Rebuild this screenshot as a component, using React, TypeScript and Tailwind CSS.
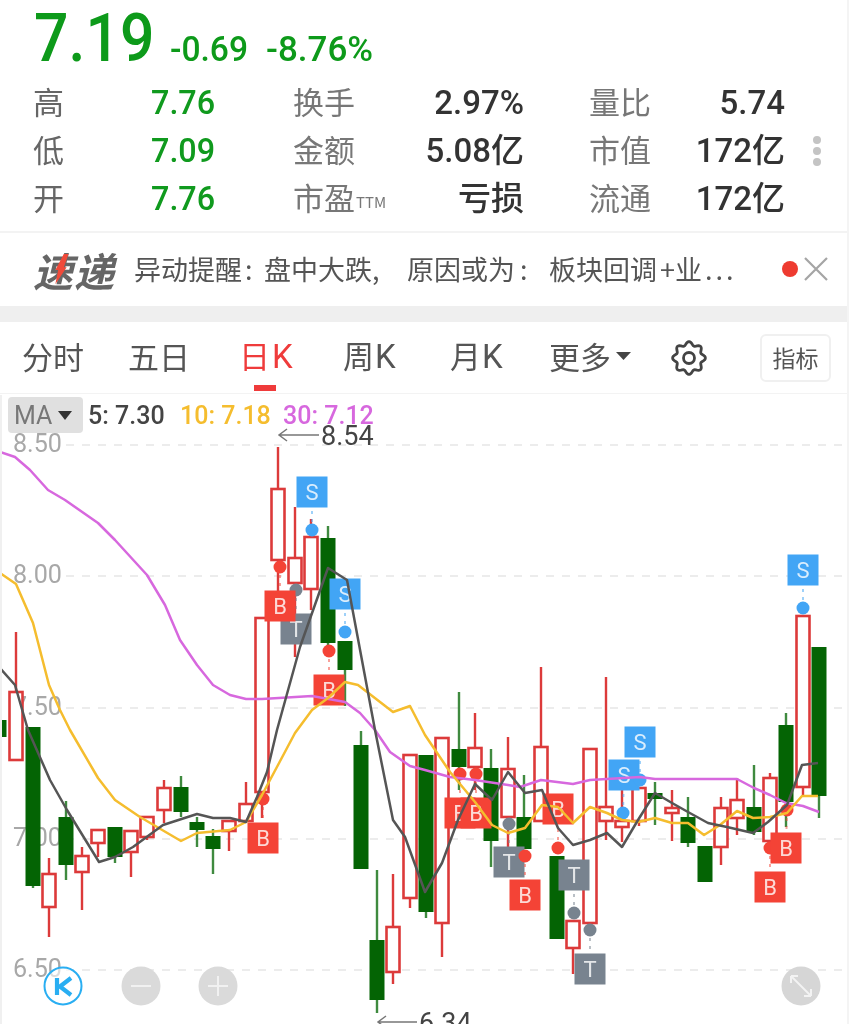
import React from "react";

const CJK = '"Noto Sans CJK SC", "Noto Sans", sans-serif';
const NUM = 'Roboto, "Noto Sans CJK SC", sans-serif';

type C = [number, number, number, number, number, "r" | "g"];
// x, wickTop, wickBottom, bodyTop, bodyBottom, type
const candles: C[] = [
  [-1, 682, 750, 720, 737, "g"],
  [16, 632, 760, 692, 760, "r"],
  [33, 727, 888, 727, 886, "g"],
  [49, 858, 937, 874, 907, "r"],
  [66, 801, 880, 817, 865, "g"],
  [82, 847, 910, 856, 872, "r"],
  [98, 829, 857, 830, 843, "r"],
  [115, 827, 863, 827, 857, "g"],
  [131, 831, 877, 831, 852, "r"],
  [147, 817, 840, 817, 837, "r"],
  [164, 780, 823, 788, 810, "r"],
  [181, 776, 817, 787, 812, "g"],
  [197, 817, 847, 822, 830, "g"],
  [213, 829, 874, 836, 849, "g"],
  [229, 820, 851, 821, 831, "r"],
  [246, 782, 822, 804, 821, "r"],
  [262, 618, 818, 618, 792, "r"],
  [278, 447, 600, 489, 560, "r"],
  [295, 507, 657, 558, 583, "r"],
  [311, 519, 610, 537, 589, "r"],
  [328, 526, 650, 538, 643, "g"],
  [345, 641, 706, 641, 670, "g"],
  [361, 731, 869, 745, 869, "g"],
  [377, 870, 1013, 940, 1000, "g"],
  [393, 874, 984, 927, 972, "r"],
  [410, 755, 908, 755, 898, "r"],
  [426, 755, 918, 755, 912, "g"],
  [442, 738, 957, 738, 923, "r"],
  [459, 692, 790, 749, 767, "g"],
  [475, 713, 790, 748, 767, "r"],
  [491, 749, 867, 768, 841, "g"],
  [508, 737, 850, 769, 817, "r"],
  [524, 775, 849, 817, 849, "g"],
  [541, 667, 821, 747, 821, "r"],
  [557, 856, 939, 856, 939, "g"],
  [573, 921, 974, 921, 948, "r"],
  [590, 749, 923, 749, 923, "r"],
  [606, 677, 840, 807, 821, "r"],
  [622, 790, 842, 821, 827, "r"],
  [639, 788, 826, 788, 821, "r"],
  [655, 782, 825, 793, 799, "g"],
  [672, 790, 841, 808, 813, "r"],
  [688, 797, 847, 817, 843, "g"],
  [705, 846, 882, 846, 882, "g"],
  [721, 797, 865, 808, 847, "r"],
  [737, 778, 835, 800, 818, "r"],
  [754, 765, 835, 807, 832, "g"],
  [770, 773, 841, 778, 841, "r"],
  [786, 713, 827, 725, 802, "g"],
  [803, 616, 797, 616, 787, "r"],
  [819, 647, 818, 647, 796, "g"],
];

const purple =
  "0,452 15,457 30,470 48,490 65,500 98,523 115,540 147,575 165,605 180,640 197,665 213,685 230,695 246,699 262,699 312,696 345,702 360,713 375,730 390,752 410,766 425,770 450,777 475,780 508,785 520,787 541,780 573,784 590,780 640,777 655,779 737,779 754,788 770,795 786,803 803,806 819,812";
const yellow =
  "0,573 16,584 33,623 49,685 60,710 70,730 98,778 115,800 140,817 181,841 197,833 230,830 246,822 262,795 278,765 295,733 312,710 328,698 345,682 358,685 393,712 410,706 425,735 450,772 475,802 492,825 508,833 525,828 542,805 558,807 573,823 590,807 607,813 622,820 638,822 655,818 672,823 688,823 704,835 720,825 737,811 753,818 770,817 787,813 802,796 818,796";
const black =
  "0,668 15,685 28,730 50,780 67,810 99,862 115,857 133,847 163,825 197,814 213,818 230,818 246,822 257,797 267,772 277,730 300,647 328,568 347,580 375,730 393,820 405,837 425,892 442,863 458,820 475,784 492,800 508,772 525,793 542,790 558,828 573,845 590,840 607,833 622,847 638,820 655,793 672,803 688,812 708,823 727,827 753,833 768,822 787,805 802,765 818,763";

const RED = "#f44336";
const BLUE = "#42a5f5";
const GRAY = "#78838f";

type Sig = { k: "B" | "S" | "T"; x: number; y: number; dx: number; dy: number };
// badge centre + dot centre
const signals: Sig[] = [
  { k: "T", x: 296, y: 629, dx: 296, dy: 590 },
  { k: "B", x: 280, y: 606, dx: 280, dy: 567 },
  { k: "S", x: 312, y: 492, dx: 312, dy: 530 },
  { k: "B", x: 329, y: 690, dx: 329, dy: 651 },
  { k: "S", x: 345, y: 594, dx: 345, dy: 632 },
  { k: "B", x: 263, y: 838, dx: 263, dy: 799 },
  { k: "B", x: 460, y: 813, dx: 460, dy: 774 },
  { k: "B", x: 476, y: 813, dx: 476, dy: 774 },
  { k: "T", x: 509, y: 862, dx: 509, dy: 824 },
  { k: "B", x: 525, y: 895, dx: 525, dy: 856 },
  { k: "B", x: 558, y: 809, dx: 558, dy: 848 },
  { k: "T", x: 574, y: 875, dx: 574, dy: 913 },
  { k: "T", x: 590, y: 969, dx: 590, dy: 930 },
  { k: "S", x: 624, y: 775, dx: 623, dy: 813 },
  { k: "S", x: 640, y: 742, dx: 640, dy: 780 },
  { k: "B", x: 770, y: 887, dx: 770, dy: 848 },
  { k: "B", x: 786, y: 848, dx: 787, dy: 810 },
  { k: "S", x: 803, y: 570, dx: 803, dy: 608 },
];

const gearPath = (() => {
  const pts: string[] = [];
  for (let i = 0; i < 96; i++) {
    const t = (i / 96) * Math.PI * 2;
    const r = 14.6 + 1.8 * Math.cos(8 * t);
    pts.push(`${(18 + r * Math.sin(t)).toFixed(2)},${(18 - r * Math.cos(t)).toFixed(2)}`);
  }
  return pts.join(" ");
})();

function Chart() {
  const colour = { B: RED, S: BLUE, T: GRAY };
  return (
    <svg className="block" width={849} height={630} viewBox="0 394 849 630">
      {[445, 576, 708, 839, 970].map((y) => (
        <line key={y} x1={66} x2={846} y1={y} y2={y} stroke="#e6e6e6" strokeWidth={1.5} strokeDasharray="8 8" />
      ))}
      {([["8.50", 443], ["8.00", 574], ["7.50", 706], ["7.00", 837], ["6.50", 968]] as [string, number][]).map(([t, y]) => (
        <text key={t} x={13} y={y + 9} fontSize={25} fill="#a8a8a8" fontFamily={NUM} textLength={49} lengthAdjust="spacingAndGlyphs">
          {t}
        </text>
      ))}
      {candles.map(([x, wt, wb, bt, bb, t], i) => {
        const col = t === "r" ? "#dc3a3a" : "#046404";
        const wick = t === "r" ? "#dc3a3a" : "#3f8a3f";
        return (
          <g key={i}>
            <line x1={x} x2={x} y1={wt} y2={wb} stroke={wick} strokeWidth={2.4} />
            {t === "r" ? (
              <rect x={x - 6.5} y={bt} width={13} height={bb - bt} fill="#fff" stroke={col} strokeWidth={2.6} />
            ) : (
              <rect x={x - 7.5} y={bt} width={15} height={bb - bt} fill={col} />
            )}
          </g>
        );
      })}
      {signals.map((s, i) => (
        <g key={i}>
          <line x1={s.dx} x2={s.x} y1={s.dy} y2={s.y} stroke={colour[s.k]} strokeWidth={2} strokeDasharray="3 5" opacity={0.5} />
          <circle cx={s.dx} cy={s.dy} r={6.5} fill={colour[s.k]} />
          <rect x={s.x - 15.5} y={s.y - 15.5} width={31} height={31} fill={colour[s.k]} />
          <text x={s.x} y={s.y + 8} textAnchor="middle" fontSize={22} fill="#fff" opacity={0.8} fontFamily={NUM}>
            {s.k}
          </text>
        </g>
      ))}
      <polyline points={purple} fill="none" stroke="#d768de" strokeWidth={2.5} strokeLinejoin="round" />
      <polyline points={yellow} fill="none" stroke="#f5bd2e" strokeWidth={2.5} strokeLinejoin="round" />
      <polyline points={black} fill="none" stroke="#555" strokeWidth={2.5} strokeLinejoin="round" />

      <path d="M319 435H279M287 429l-8 6 8 6" fill="none" stroke="#777" strokeWidth={1.5} />
      <text x={321} y={445} fontSize={27} fill="#444" fontFamily={NUM}>8.54</text>
      <path d="M417 1022H378M386 1016l-8 6 8 6" fill="none" stroke="#777" strokeWidth={1.5} />
      <text x={419} y={1032} fontSize={27} fill="#444" fontFamily={NUM}>6.34</text>

      <circle cx={63} cy={986} r={18.5} fill="#fff" fillOpacity={0.6} stroke="#29aef2" strokeWidth={2} />
      <path d="M57 978v17M71 978l-11 8.500 11 8.500" fill="none" stroke="#29aef2" strokeWidth={4.2} strokeLinejoin="round" />
      <circle cx={141} cy={986} r={19.5} fill="#dadada" />
      <path d="M131 986h20" stroke="#f1f1f1" strokeWidth={2} />
      <circle cx={218} cy={986} r={19.5} fill="#dadada" />
      <path d="M208 986h20M218 976v20" stroke="#f1f1f1" strokeWidth={2} />
      <circle cx={801} cy={986} r={19.5} fill="#d6d6d6" />
      <path d="M791 976l20 20M791 976h7M791 976v7M811 996h-7M811 996v-7" stroke="#f3f3f3" strokeWidth={2} fill="none" />
    </svg>
  );
}

function Stat({
  a, b, c, d, e, f, kebab,
}: { a: string; b: string; c: React.ReactNode; d: string; e: string; f: string; kebab?: boolean }) {
  return (
    <div className="flex items-center h-12 pl-[33px] relative">
      <span className="w-[118px] text-[31px] leading-[40px] text-[#666] -translate-y-[2px]">{a}</span>
      <span className="w-[142px] text-[33px] font-medium text-[#109a1e] origin-left scale-x-[.98]" style={{ fontFamily: NUM }}>{b}</span>
      <span className="w-[120px] text-[31px] leading-[40px] text-[#777] whitespace-nowrap -translate-y-[2px]">{c}</span>
      <span className="w-[111px] text-right text-[33px] font-medium text-[#333] whitespace-nowrap origin-right" style={{ fontFamily: NUM }}>{d}</span>
      <span className="w-[65px]" />
      <span className="w-[90px] text-[31px] leading-[40px] text-[#777] -translate-y-[2px]">{e}</span>
      <span className="w-[106px] text-right text-[33px] font-medium text-[#333] whitespace-nowrap origin-right" style={{ fontFamily: NUM }}>{f}</span>
      {kebab && (
        <span className="absolute left-[813px] top-[9px] flex flex-col gap-[3px]">
          <i className="block w-2 h-2 rounded-full bg-[#c4c4c4]" />
          <i className="block w-2 h-2 rounded-full bg-[#c4c4c4]" />
          <i className="block w-2 h-2 rounded-full bg-[#c4c4c4]" />
        </span>
      )}
    </div>
  );
}

function Tab({ label, w, active }: { label: React.ReactNode; w: string; active?: boolean }) {
  return (
    <span className={`${w} text-[31px] leading-[40px] whitespace-nowrap -translate-y-[2px] ${active ? "text-[#ef3b3b]" : "text-[#555]"}`}>{label}</span>
  );
}

function K({ gap }: { gap: string }) {
  return <span className={`${gap} text-[33px]`} style={{ fontFamily: "Roboto" }}>K</span>;
}

export default function App() {
  return (
    <div lang="zh-CN" className="w-[849px] h-[1024px] overflow-hidden bg-white relative blur-[0.7px]" style={{ fontFamily: CJK }}>
      {/* quote */}
      <div className="h-[233px] border-b-2 border-[#f3f3f3]">
        <div className="flex items-end h-[79px] pl-[34px] text-[#0d9a1a]" style={{ fontFamily: NUM }}>
          <span className="text-[66px] leading-[80px] font-medium w-[136px] origin-left scale-x-[.92]">7.19</span>
          <span className="text-[35px] leading-[44px] font-medium w-[96px] mb-[7px] origin-left scale-x-[.96] whitespace-nowrap">-0.69</span>
          <span className="text-[35px] leading-[44px] font-medium mb-[7px] origin-left whitespace-nowrap">-8.76%</span>
        </div>
        <Stat a="高" b="7.76" c="换手" d="2.97%" e="量比" f="5.74" />
        <Stat a="低" b="7.09" c="金额" d="5.08亿" e="市值" f="172亿" kebab />
        <Stat
          a="开"
          b="7.76"
          c={<span className="inline-flex items-end">市盈<span className="text-[15px] leading-[30px] ml-[1px]">TTM</span></span>}
          d="亏损"
          e="流通"
          f="172亿"
        />
      </div>

      {/* ticker */}
      <div className="h-[73px] flex items-center pl-[33px] relative">
        <span className="w-[101px] text-[40px] leading-none font-bold italic text-[#666] whitespace-nowrap tracking-[1px] relative">
          速递
          <svg className="absolute left-[19px] top-[3px]" width="18" height="34" viewBox="0 0 18 36">
            <path d="M12 1h5l-5 14h3L3 33l3-15H3z" fill="#f04a3a" />
          </svg>
        </span>
        <span className="text-[27px] text-[#555] whitespace-nowrap">
          异动提醒<span className="inline-block w-[22px] pl-[3px]">:</span>盘中大跌<span className="inline-block w-[35px]">,</span>原因或为<span className="inline-block w-[34px] pl-[5px]">:</span>板块回调<span className="inline-block w-[3px]" />+业<span className="tracking-[3px] ml-[3px]">...</span>
        </span>
        <i className="absolute left-[782px] top-[28px] w-4 h-4 rounded-full bg-[#ee3b30]" />
        <svg className="absolute left-[803px] top-[23px]" width="26" height="26" viewBox="0 0 26 26">
          <path d="M2 2l22 22M24 2L2 24" stroke="#a5a5a5" strokeWidth="2.200" />
        </svg>
      </div>

      {/* separator */}
      <div className="h-[16px] bg-[#efefef]" />

      {/* tabs */}
      <div className="h-[72px] flex items-center pl-[22px] relative border-b border-[#f3f3f3]">
        <Tab label="分时" w="w-[106px]" />
        <Tab label="五日" w="w-[111px]" />
        <Tab label={<>日<K gap="ml-[2px]" /></>} w="w-[104px]" active />
        <Tab label={<>周<K gap="ml-[1px]" /></>} w="w-[107px]" />
        <Tab label={<>月<K gap="ml-[1px]" /></>} w="w-[99px]" />
        <span className="w-[123px] flex items-center text-[31px] leading-[40px] text-[#555] -translate-y-[2px]">
          更多
          <svg className="ml-[5px]" width="15" height="10" viewBox="0 0 15 10"><path d="M0 1h15L7.500 9z" fill="#444" /></svg>
        </span>
        <svg width="36" height="36" viewBox="0 0 36 36" className="-ml-[1px]" fill="none" stroke="#444" strokeWidth="2.800" strokeLinejoin="round">
          <polygon points={gearPath} />
          <circle cx="18" cy="18" r="5.500" />
        </svg>
        <span className="ml-[53px] w-[71px] h-[48px] border-2 border-[#f0f0f0] rounded-md flex items-center justify-center text-[23px] text-[#555]">指标</span>
        <i className="absolute left-[254px] bottom-[2px] w-[22px] h-[6px] bg-[#ef3b3b]" />
      </div>

      {/* chart */}
      <div className="relative">
        <Chart />
        <div className="absolute left-[8px] top-[3px] flex items-center text-[25px] leading-none font-medium whitespace-nowrap" style={{ fontFamily: NUM }}>
          <span className="w-[75px] h-[36px] bg-[#e0e0e0] rounded flex items-center pl-[6px] gap-[6px] text-[#777] font-normal">
            MA
            <svg width="14" height="9" viewBox="0 0 14 9"><path d="M0 0h14L7 9z" fill="#333" /></svg>
          </span>
          <span className="ml-[5px] w-[92px] text-[#444]">5: 7.30</span>
          <span className="w-[103px] text-[#f5bd2e]">10: 7.18</span>
          <span className="text-[#d768de]">30: 7.12</span>
        </div>
      </div>

      <div className="absolute right-0 top-0 bottom-0 w-[2px] bg-[#f4f4f4]" />
      <div className="absolute left-0 top-[395px] bottom-0 w-[2px] bg-[#f0f0f0]" />
    </div>
  );
}
